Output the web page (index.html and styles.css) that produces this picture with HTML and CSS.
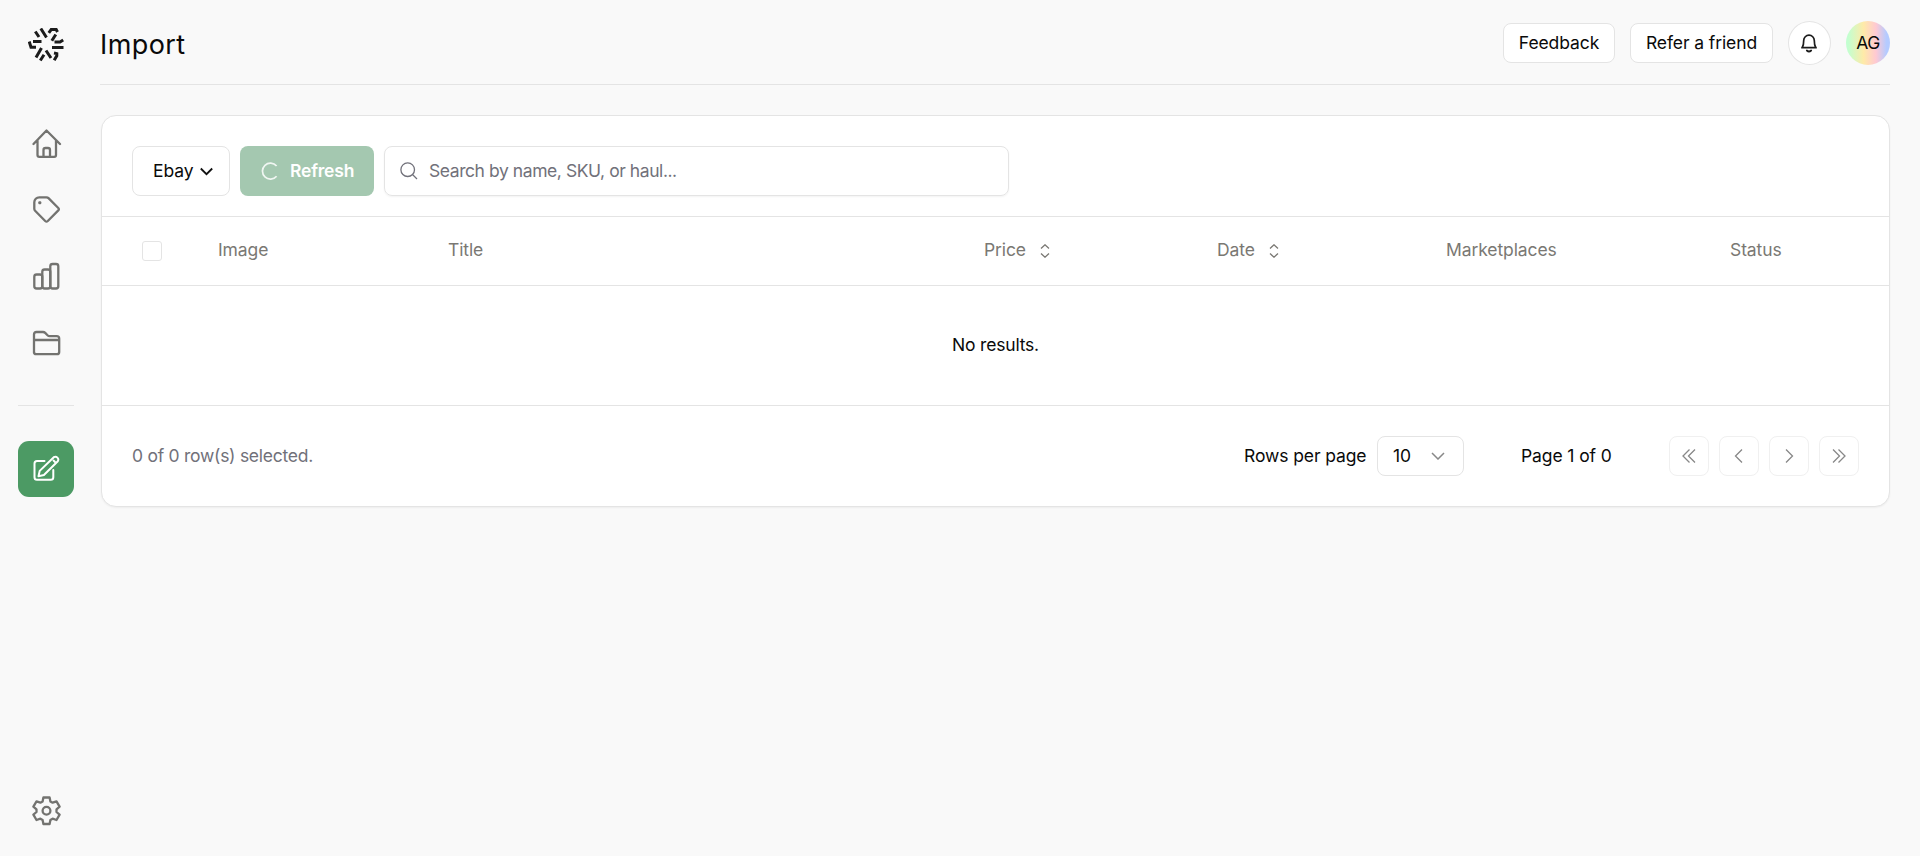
FILE: index.html
```html
<!DOCTYPE html>
<html lang="en">
<head>
<meta charset="utf-8">
<title>Import</title>
<link rel="stylesheet" href="styles.css">
</head>
<body>
<div class="app">
  <nav class="sidebar">
    <svg class="logo" viewBox="0 0 36 34" fill="none" stroke="#1c1c1c" stroke-width="3">
      <path d="M7.300 3.500l3.700 5.500M12.800 .5l5.700 9M20.800 4.800l2.400-3.300h5l1.300 2.500M23.800 12.800l4-6.300M26.500 13.900h5.500l3.200-2M24 19.500h11.500M26 25l2.800.6v2.200l-2.600 4.500M18 22.500l5 7.500M12.300 32.500l3.700-5.700M8 29.500l5.500-9.500M1.200 13.500l1.800 5.700H8M5 13.500h8.500"/>
    </svg>
    <div class="nav">
      <svg class="icon" viewBox="0 0 30 30"><path d="M1.500 15L14.500 1.500 28 15M5.500 11.500V26q0 1.800 1.800 1.800h14.900q1.800 0 1.800-1.800V11.500M11.500 27.500v-6.500q0-2 2-2h2.500q2 0 2 2v6.500"/></svg>
      <svg class="icon tag" viewBox="0 0 30 30"><path d="M2.300 7.300a5 5 0 0 1 5-5h7.200q1.200 0 2 .8L26.300 13q1.200 1.200 0 2.400L15.800 26q-1.300 1.200-2.600 0L3.100 15.800q-.8-.8-.8-2z"/><rect class="dot" x="6.300" y="6.300" width="3" height="3" rx="1"/></svg>
      <svg class="icon" viewBox="0 0 30 30"><rect x="2.300" y="12.500" width="8" height="14" rx="2.300"/><rect x="10.300" y="7.500" width="8" height="19" rx="2.300"/><rect x="18.300" y="2" width="8" height="24.500" rx="2.300"/></svg>
      <svg class="icon" viewBox="0 0 30 30"><path d="M2 24V5.500Q2 3 4.500 3H11q1.300 0 2.200.9l2.300 2.300q.9.900 2.200.9h7q2.500 0 2.500 2.500V23q0 2.200-2.200 2.200H4.200Q2 25.200 2 23M2 11h25"/></svg>
    </div>
    <div class="rule"></div>
    <div class="compose">
      <svg class="icon" viewBox="0 0 30 30"><path d="M12.500 6H5Q2.500 6 2.500 8.500v13.700q0 2.500 2.500 2.500h13.800q2.500 0 2.500-2.500V15M6.500 21.200l1.200-5.300L21.800 2.200a2.900 2.900 0 0 1 4 4L11.900 20z"/><path d="M21.500 5.500l1.500 1.500"/></svg>
    </div>
    <svg class="icon gear" viewBox="0 0 30 30"><path d="M11.400 1.500h6.200l.8 4 2.200 1.200 3.900-1.300 3.100 5.300-3.100 2.700v2.600l3.100 2.700-3.100 5.300-3.900-1.300-2.200 1.300-.8 4h-6.200l-.8-4-2.200-1.300-3.900 1.300-3.100-5.300L4.500 16v-2.600l-3.100-2.700 3.100-5.300 3.900 1.300 2.200-1.200z"/><circle cx="14.500" cy="14.700" r="3.900"/></svg>
  </nav>
  <main class="main">
    <header class="header">
      <h1 class="title">Import</h1>
      <div class="actions">
        <button class="btn feedback">Feedback</button>
        <button class="btn refer">Refer a friend</button>
        <button class="bell"><svg width="20" height="20" viewBox="0 0 20 20" fill="none" stroke="#1c1c1c" stroke-width="1.700" stroke-linejoin="round"><path d="M2.200 14.700h15.600M3.300 14.600Q4.700 12 4.700 7.500a5.300 5.300 0 0 1 10.600 0Q15.300 12 16.700 14.600"/><path d="M7.800 17.500q2.200 2 4.400 0" stroke-linecap="round"/></svg></button>
        <div class="avatar">AG</div>
      </div>
    </header>
    <section class="card">
      <div class="toolbar">
        <button class="market">Ebay<svg width="13" height="9" viewBox="0 0 13 9" fill="none" stroke="#111" stroke-width="1.800"><path d="M.8 1.500l5.700 5.700 5.700-5.700"/></svg></button>
        <button class="refresh"><svg width="18" height="18" viewBox="0 0 18 18" fill="none" stroke="#f0f6f2" stroke-width="1.700"><path d="M15.600 4A8 8 0 1 0 15.600 14.200"/></svg><span>Refresh</span></button>
        <div class="search"><svg width="18" height="18" viewBox="0 0 18 18" fill="none" stroke="#71717a" stroke-width="1.300"><circle cx="7.700" cy="7.700" r="6.800"/><path d="M12.500 12.500l4.500 4.500"/></svg><span>Search by name, SKU, or haul...</span></div>
      </div>
      <div class="thead">
        <span class="check"></span>
        <span>Image</span>
        <span>Title</span>
        <span class="sortable">Price<svg class="sort" viewBox="0 0 10 14"><path d="M1 4.500l4-3.700 4 3.700M1 9.500l4 3.700 4-3.700"/></svg></span>
        <span class="sortable">Date<svg class="sort" viewBox="0 0 10 14"><path d="M1 4.500l4-3.700 4 3.700M1 9.500l4 3.700 4-3.700"/></svg></span>
        <span>Marketplaces</span>
        <span>Status</span>
      </div>
      <div class="empty">No results.</div>
      <footer class="footer">
        <span class="selected">0 of 0 row(s) selected.</span>
        <span class="rows">Rows per page</span>
        <button class="select">10<svg width="14" height="8" viewBox="0 0 14 8" fill="none" stroke="#888" stroke-width="1.500"><path d="M1 1l6 6 6-6"/></svg></button>
        <span class="page">Page 1 of 0</span>
        <div class="pager">
          <button class="pg"><svg viewBox="0 0 16 16"><path d="M8.500 1.500L2 8l6.500 6.500M14 1.500L7.500 8l6.500 6.500"/></svg></button>
          <button class="pg"><svg viewBox="0 0 16 16"><path d="M11 1.500L4.500 8l6.500 6.500"/></svg></button>
          <button class="pg"><svg viewBox="0 0 16 16"><path d="M5 1.500L11.500 8 5 14.500"/></svg></button>
          <button class="pg"><svg viewBox="0 0 16 16"><path d="M2 1.500L8.500 8 2 14.500M7.500 1.500L14 8l-6.500 6.500"/></svg></button>
        </div>
      </footer>
    </section>
  </main>
</div>
</body>
</html>
```
FILE: styles.css
```css
* { box-sizing: border-box; }
body { margin: 0; background: #f9f9f9; color: #0a0a0a; font: 17.5px/25px Inter, "Liberation Sans", sans-serif; letter-spacing: -.1px; }
button { font: inherit; letter-spacing: inherit; color: inherit; padding: 0 0 2px; margin: 0; background: #fff; border: 1px solid #e4e4e4; border-radius: 8px; display: flex; align-items: center; }
svg { display: block; flex: none; }
.app { display: flex; height: 856px; }
.sidebar { width: 100px; padding: 28px 0 30px 18px; display: flex; flex-direction: column; }
.logo { width: 36px; height: 34px; margin-left: 10px; }
.icon { width: 30px; height: 30px; margin-left: 14px; fill: none; stroke: #737370; stroke-width: 2.300; stroke-linejoin: round; stroke-linecap: round; }
.icon .dot { fill: #737370; stroke: none; }
.nav { display: flex; flex-direction: column; gap: 37px; margin-top: 67px; }
.tag { margin-top: -1px; }
.rule { width: 56px; height: 1px; background: #e4e4e4; margin-top: 46px; }
.compose { width: 56px; height: 56px; border-radius: 11px; background: #4c9a64; margin-top: 35px; padding-top: 14px; }
.compose .icon { stroke: #fff; stroke-width: 2; }
.gear { margin-top: auto; }
.main { width: 1790px; }
.header { height: 85px; border-bottom: 1px solid #e4e4e4; display: flex; justify-content: space-between; padding-top: 21px; }
.title { margin: 6px 0 0; font-size: 27px; line-height: 36px; font-weight: 400; letter-spacing: .4px; }
.actions { display: flex; align-items: flex-start; }
.btn { height: 40px; margin-top: 2px; justify-content: center; }
.feedback { width: 112px; margin-right: 15px; }
.refer { width: 143px; margin-right: 15px; }
.bell { width: 43px; height: 44px; padding: 0 1px 1px 0; border-radius: 50%; justify-content: center; margin-right: 15px; }
.avatar { width: 44px; height: 44px; padding-bottom: 1px; border-radius: 50%; display: flex; align-items: center; justify-content: center; letter-spacing: -.5px; background: linear-gradient(90deg, #c3ffd0 5%, #ffeaa8 40%, #ffc9d2 68%, #b5cbff 92%); }
.card { margin: 30px 0 0 1px; width: 1789px; height: 392px; background: #fff; border: 1px solid #e4e4e4; border-radius: 15px; box-shadow: 0 1px 2px rgba(0,0,0,.05); }
.toolbar { height: 101px; padding: 30px 0 0 30px; display: flex; gap: 10px; border-bottom: 1px solid #e4e4e4; }
.market { width: 98px; height: 50px; padding-left: 20px; gap: 7px; }
.market svg { margin-top: 3px; }
.refresh { width: 134px; height: 50px; border: 0; background: #a4c8b0; color: #fff; font-weight: 600; padding-left: 21px; gap: 11px; letter-spacing: -.2px; }
.refresh svg, .search svg { margin-top: 1px; }
.search { width: 625px; height: 50px; border: 1px solid #e4e4e4; border-radius: 8px; box-shadow: 0 1px 2px rgba(0,0,0,.05); display: flex; align-items: center; padding: 0 0 2px 15px; gap: 11px; color: #71717a; letter-spacing: -.43px; }
.thead { height: 69px; border-bottom: 1px solid #e4e4e4; display: grid; grid-template-columns: 76px 230px 536px 233px 229px 284px 1fr; padding: 0 0 4px 40px; align-items: center; color: #7a7873; }
.check { width: 20px; height: 20px; border: 1px solid #e4e4e4; border-radius: 3px; margin-top: 3px; }
.sortable { display: flex; align-items: center; gap: 14px; }
.sort { width: 10px; height: 14px; fill: none; stroke: #7a7873; stroke-width: 1.300; margin-top: 4px; }
.empty { height: 120px; border-bottom: 1px solid #e4e4e4; display: flex; align-items: center; justify-content: center; padding-bottom: 2px; letter-spacing: -.2px; }
.footer { height: 100px; display: flex; align-items: center; padding: 0 30px; }
.selected { color: #71717a; width: 1112px; letter-spacing: -.26px; padding-bottom: 2px; }
.rows { width: 133px; padding-bottom: 2px; }
.select { width: 87px; height: 40px; padding: 0 18px 2px 15px; justify-content: space-between; }
.select svg { margin-top: 2px; }
.page { margin-left: 57px; width: 148px; padding-bottom: 2px; }
.pager { display: flex; gap: 10px; }
.pg { width: 40px; height: 40px; padding: 0; border-color: #f0f0f0; justify-content: center; }
.pg svg { width: 16px; height: 16px; fill: none; stroke: #888; stroke-width: 1.300; }
```
